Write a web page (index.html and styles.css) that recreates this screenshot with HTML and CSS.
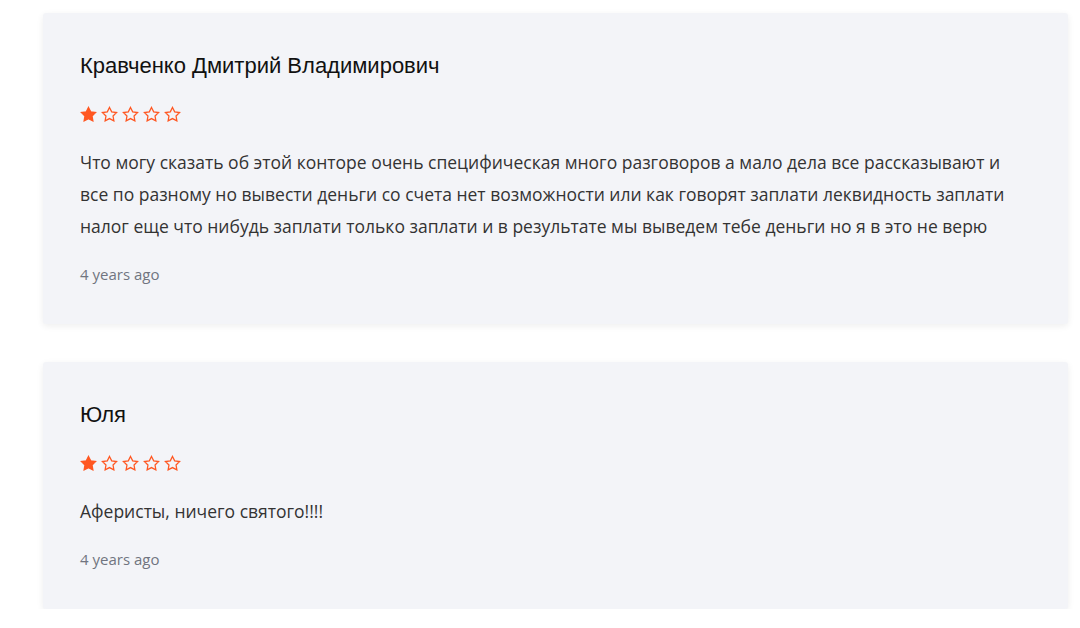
FILE: index.html
```html
<!DOCTYPE html>
<html lang="ru">
<head>
    <meta charset="UTF-8">
    <meta name="viewport" content="width=device-width, initial-scale=1.0">
    <title>Отзывы</title>
    <link rel="stylesheet" href="styles.css">
</head>
<body>
    <div class="reviews">
        <div class="review-card">
            <div class="review-author">Кравченко Дмитрий Владимирович</div>
            <div class="review-rating">
                <svg class="star filled" viewBox="0 0 24 24"><polygon points="12 2 15.09 8.26 22 9.27 17 14.14 18.18 21.02 12 17.77 5.82 21.02 7 14.14 2 9.27 8.91 8.26 12 2"></polygon></svg>
                <svg class="star" viewBox="0 0 24 24"><polygon points="12 2 15.09 8.26 22 9.27 17 14.14 18.18 21.02 12 17.77 5.82 21.02 7 14.14 2 9.27 8.91 8.26 12 2"></polygon></svg>
                <svg class="star" viewBox="0 0 24 24"><polygon points="12 2 15.09 8.26 22 9.27 17 14.14 18.18 21.02 12 17.77 5.82 21.02 7 14.14 2 9.27 8.91 8.26 12 2"></polygon></svg>
                <svg class="star" viewBox="0 0 24 24"><polygon points="12 2 15.09 8.26 22 9.27 17 14.14 18.18 21.02 12 17.77 5.82 21.02 7 14.14 2 9.27 8.91 8.26 12 2"></polygon></svg>
                <svg class="star" viewBox="0 0 24 24"><polygon points="12 2 15.09 8.26 22 9.27 17 14.14 18.18 21.02 12 17.77 5.82 21.02 7 14.14 2 9.27 8.91 8.26 12 2"></polygon></svg>
            </div>
            <div class="review-text">Что могу сказать об этой конторе очень специфическая много разговоров а мало дела все рассказывают и все по разному но вывести деньги со счета нет возможности или как говорят заплати леквидность заплати налог еще что нибудь заплати только заплати и в результате мы выведем тебе деньги но я в это не верю</div>
            <div class="review-date">4 years ago</div>
        </div>
        <div class="review-card">
            <div class="review-author">Юля</div>
            <div class="review-rating">
                <svg class="star filled" viewBox="0 0 24 24"><polygon points="12 2 15.09 8.26 22 9.27 17 14.14 18.18 21.02 12 17.77 5.82 21.02 7 14.14 2 9.27 8.91 8.26 12 2"></polygon></svg>
                <svg class="star" viewBox="0 0 24 24"><polygon points="12 2 15.09 8.26 22 9.27 17 14.14 18.18 21.02 12 17.77 5.82 21.02 7 14.14 2 9.27 8.91 8.26 12 2"></polygon></svg>
                <svg class="star" viewBox="0 0 24 24"><polygon points="12 2 15.09 8.26 22 9.27 17 14.14 18.18 21.02 12 17.77 5.82 21.02 7 14.14 2 9.27 8.91 8.26 12 2"></polygon></svg>
                <svg class="star" viewBox="0 0 24 24"><polygon points="12 2 15.09 8.26 22 9.27 17 14.14 18.18 21.02 12 17.77 5.82 21.02 7 14.14 2 9.27 8.91 8.26 12 2"></polygon></svg>
                <svg class="star" viewBox="0 0 24 24"><polygon points="12 2 15.09 8.26 22 9.27 17 14.14 18.18 21.02 12 17.77 5.82 21.02 7 14.14 2 9.27 8.91 8.26 12 2"></polygon></svg>
            </div>
            <div class="review-text">Аферисты, ничего святого!!!!</div>
            <div class="review-date">4 years ago</div>
        </div>
    </div>
</body>
</html>
```

FILE: styles.css
```css
* {
    margin: 0;
    padding: 0;
    box-sizing: border-box;
}

body {
    font-family: "Open Sans", "Noto Sans", sans-serif;
    background-color: #ffffff;
    color: #333333;
}

.reviews {
    width: 1025px;
    margin-left: 43px;
    padding-top: 13px;
    display: flex;
    flex-direction: column;
    gap: 38px;
}

.review-card {
    background-color: #f3f4f8;
    padding: 40px 37px 40px;
    border-radius: 3px;
    box-shadow: 0 2px 7px rgb(0 0 0 / 0.07);
}

.review-author {
    font-family: "Liberation Sans", Arial, sans-serif;
    font-size: 22px;
    line-height: 26px;
    color: #111111;
}

.review-rating {
    display: flex;
    gap: 4px;
    margin-top: 27px;
}

.star {
    width: 17px;
    height: 17px;
    fill: none;
    stroke: #ff5722;
    stroke-width: 1.8;
    stroke-linejoin: miter;
}

.star.filled {
    fill: #ff5722;
}

.review-text {
    margin-top: 23px;
    font-size: 17.5px;
    line-height: 32px;
    color: #333333;
}

.review-date {
    margin-top: 22px;
    font-size: 15px;
    line-height: 20px;
    color: #707480;
}
```
